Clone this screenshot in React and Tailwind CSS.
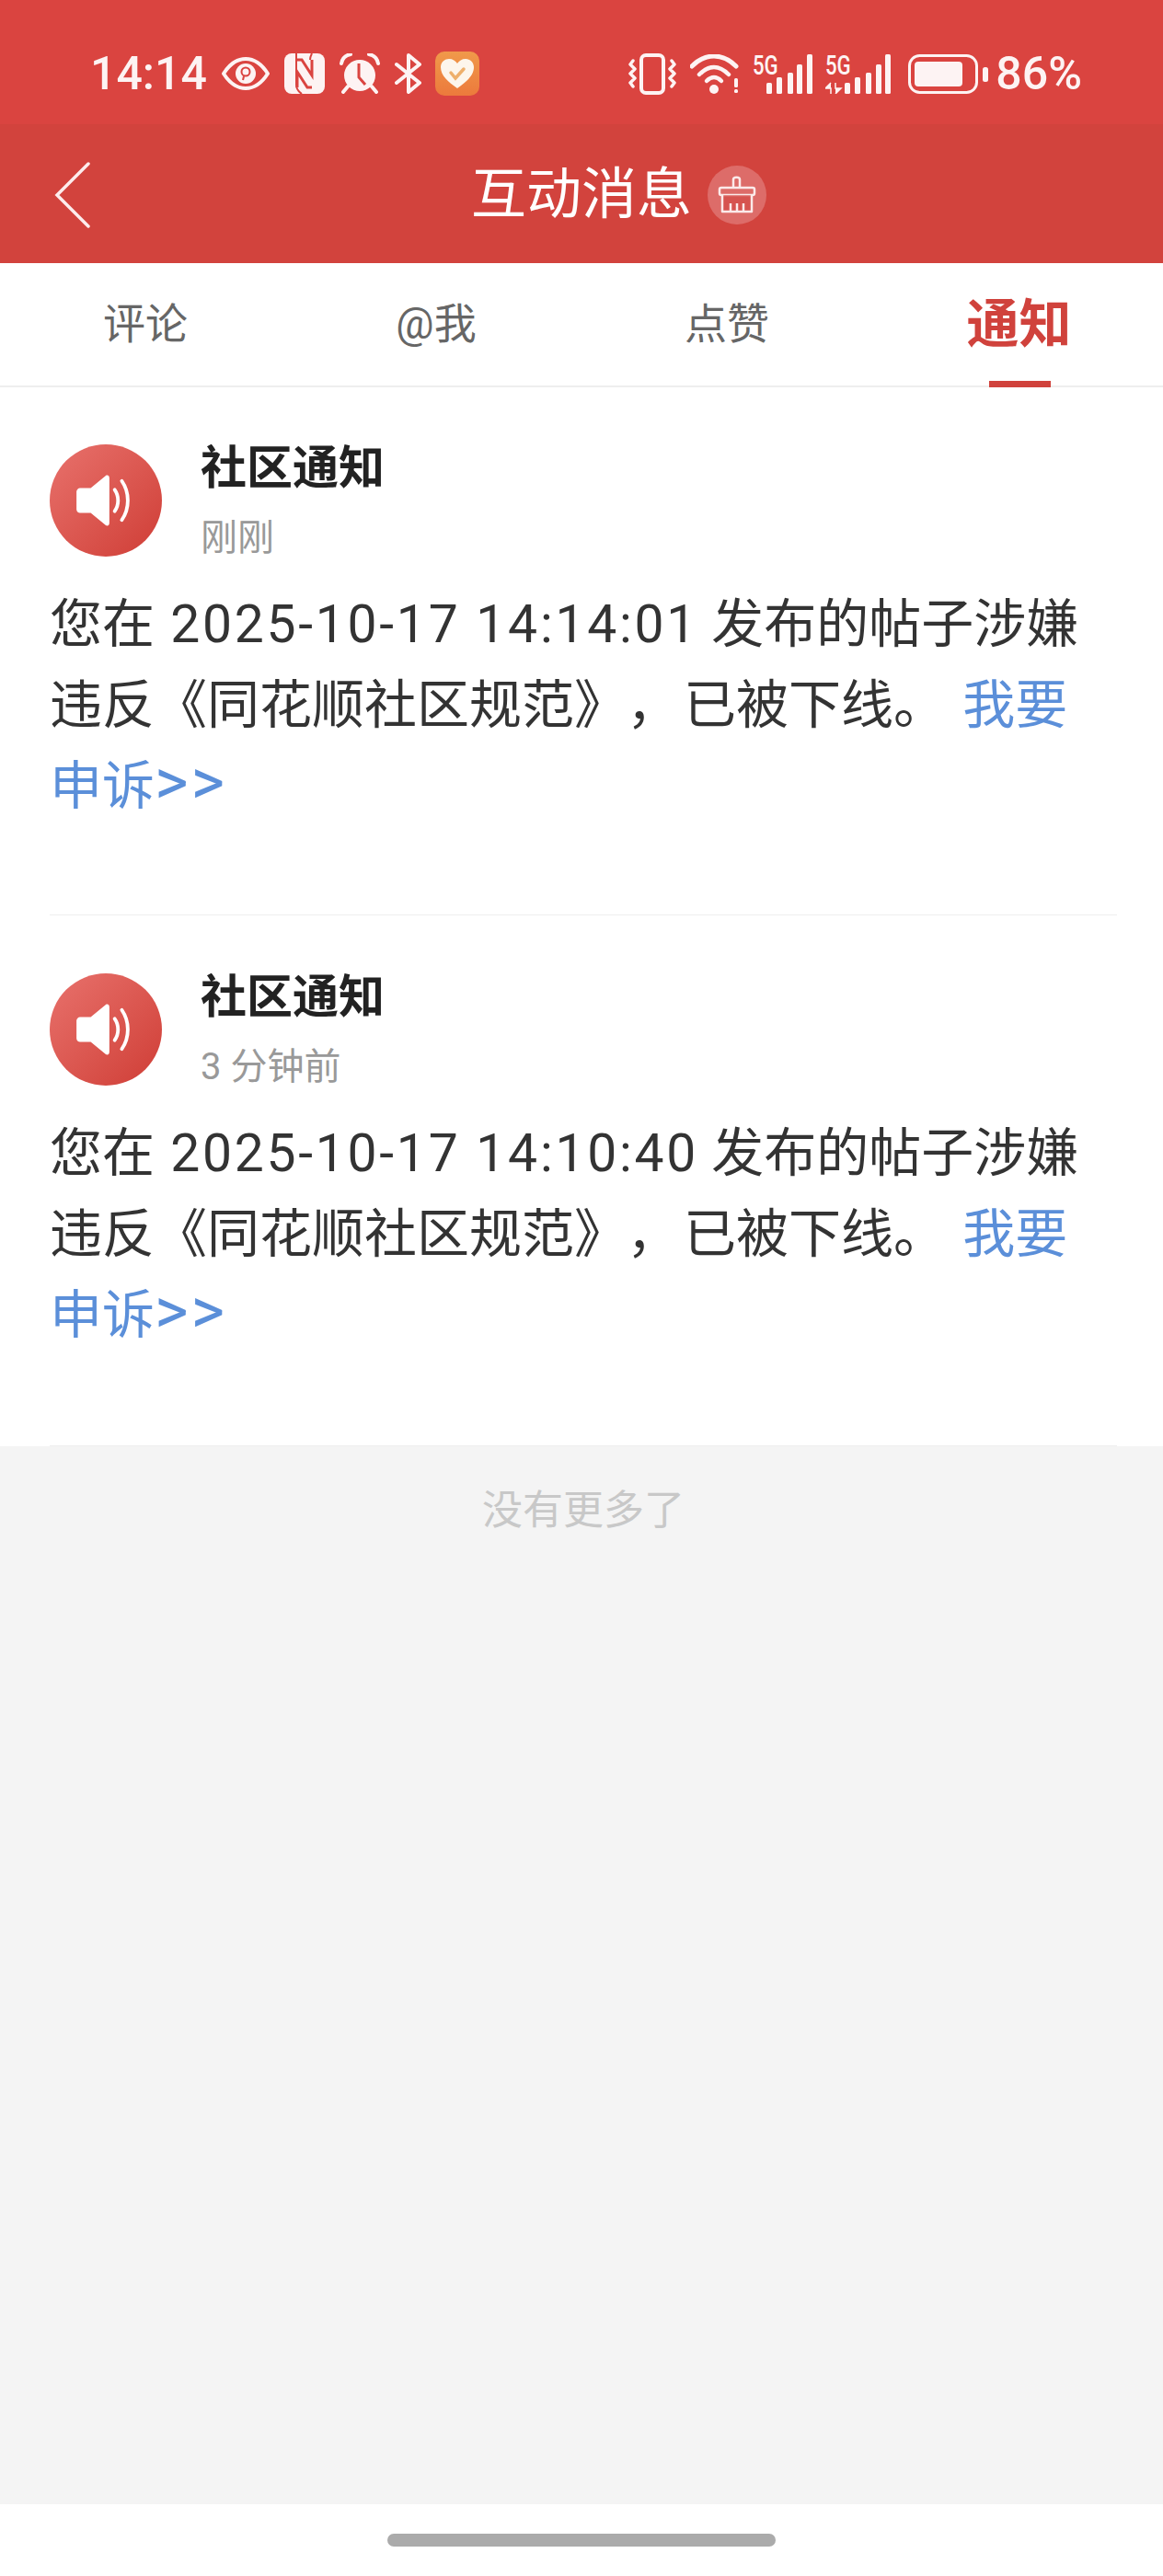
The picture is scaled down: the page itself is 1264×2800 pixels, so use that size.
const notices = [
  { time: '刚刚', stamp: '2025-10-17 14:14:01' },
  { time: '3 分钟前', stamp: '2025-10-17 14:10:40' },
];

const tabs = ['评论', '@我', '点赞'];

function EyeIcon() {
  return (
    <svg width="52" height="36" viewBox="0 0 52 36" className="ml-[16px]">
      <path d="M2 18C9 7 17 2 26 2s17 5 24 16c-7 11-15 16-24 16S9 29 2 18Z" fill="none" stroke="#fdf3f3" strokeWidth="4" strokeLinejoin="round" />
      <circle cx="26" cy="18" r="11" fill="#fdf3f3" />
      <circle cx="26" cy="16" r="4.5" fill="none" stroke="#da4440" strokeWidth="2" />
      <path d="M24 21l-1 4" stroke="#da4440" strokeWidth="2" />
    </svg>
  );
}

function NfcIcon() {
  return (
    <svg width="44" height="44" viewBox="0 0 44 44" className="ml-[16px]">
      <rect x="0" y="0" width="44" height="44" rx="8" fill="#fdf3f3" />
      <path d="M13 0v34c0 4 3 8 6 10" fill="none" stroke="#da4440" strokeWidth="2" />
      <path d="M14 7h5l11 17v-17M30 37h-5L14 20v17" fill="none" stroke="#da4440" strokeWidth="3" />
      <path d="M30 0c-1 2-2 4-2 7" fill="none" stroke="#da4440" strokeWidth="2" />
    </svg>
  );
}

function AlarmIcon() {
  return (
    <svg width="44" height="44" viewBox="0 0 44 44" className="ml-[16px]">
      <circle cx="22" cy="24" r="17" fill="#fdf3f3" />
      <path d="M2 11C3 5 7 2 12 1M42 11C41 5 37 2 32 1" fill="none" stroke="#fdf3f3" strokeWidth="4" strokeLinecap="round" />
      <path d="M9 36l-5 6M35 36l5 6" stroke="#fdf3f3" strokeWidth="4" strokeLinecap="round" />
      <path d="M21 11v15l7 8" fill="none" stroke="#da4440" strokeWidth="3" />
    </svg>
  );
}

function BluetoothIcon() {
  return (
    <svg width="30" height="44" viewBox="0 0 30 44" className="ml-[16px]">
      <path d="M2 12l25 20-12 10V2l12 10L2 32" fill="none" stroke="#fdf3f3" strokeWidth="4" strokeLinejoin="round" strokeLinecap="round" />
    </svg>
  );
}

function HealthIcon() {
  return (
    <svg width="48" height="48" viewBox="0 0 48 48" className="ml-[14px]">
      <defs>
        <linearGradient id="health" x1="0" y1="0" x2="0" y2="1">
          <stop offset="0" stopColor="#f0994a" />
          <stop offset="1" stopColor="#ec7a3c" />
        </linearGradient>
      </defs>
      <rect width="48" height="48" rx="10" fill="url(#health)" />
      <path d="M24 40C14 33 6 26 6 17 6 11 11 8 15 8c4 0 7 2 9 5 2-3 5-5 9-5 4 0 9 3 9 9 0 9-8 16-18 23Z" fill="#fdf6ec" />
      <path d="M17 23l5 6 9-10" fill="none" stroke="#eeb06c" strokeWidth="3.5" strokeLinecap="round" />
    </svg>
  );
}

function VibrateIcon() {
  return (
    <svg width="52" height="45" viewBox="0 0 52 45">
      <rect x="14" y="2" width="24" height="41" rx="5" fill="none" stroke="#fdf3f3" strokeWidth="4" />
      <path d="M5 8l-3 4 5 5-5 5 5 5-5 5 3 4M47 8l3 4-5 5 5 5-5 5 5 5-3 4" fill="none" stroke="#fdf3f3" strokeWidth="3.5" strokeLinejoin="round" strokeLinecap="round" />
    </svg>
  );
}

function WifiIcon() {
  return (
    <svg width="54" height="43" viewBox="0 0 54 43" className="ml-[15px]">
      <path d="M2 13C9 6 17 2 26 2s17 4 24 11" fill="none" stroke="#fdf3f3" strokeWidth="5" strokeLinecap="round" />
      <path d="M10 22c5-5 10-8 16-8s11 3 16 8" fill="none" stroke="#fdf3f3" strokeWidth="4.5" strokeLinecap="round" />
      <path d="M18 29c2-2 5-4 8-4s6 2 8 4" fill="none" stroke="#fdf3f3" strokeWidth="4.5" strokeLinecap="round" />
      <circle cx="26" cy="38" r="5" fill="#fdf3f3" />
      <rect x="48" y="26" width="4" height="10" rx="1.5" fill="#fdf3f3" />
      <rect x="48" y="38" width="4" height="4" rx="1.5" fill="#fdf3f3" />
    </svg>
  );
}

function SignalIcon({ arrows, className }) {
  const xs = arrows ? [21, 32, 44, 55, 65] : [15, 26, 38, 48, 59];
  const tops = [31, 25, 20, 11, 0];
  return (
    <div className={`relative h-[43px] ${arrows ? 'w-[71px]' : 'w-[65px]'} ${className}`}>
      <svg width={arrows ? 71 : 65} height="43" viewBox={`0 0 ${arrows ? 71 : 65} 43`} className="block">
        {xs.map((x, i) => (
          <rect key={x} x={x} y={tops[i]} width="6" height={43 - tops[i]} rx="1.5" fill="#fdf3f3" />
        ))}
        {arrows && (
          <path d="M6 31l-6 6h6v6M11 43l6-6h-6v-6" fill="#fdf3f3" stroke="#fdf3f3" strokeWidth="1.5" />
        )}
      </svg>
      <span className="absolute top-0 left-0 origin-top-left scale-x-[0.74] text-[30px] leading-[24px] font-medium">5G</span>
    </div>
  );
}

function BatteryIcon() {
  return (
    <svg width="87" height="43" viewBox="0 0 87 43" className="ml-[19px]">
      <rect x="1.5" y="1.5" width="73" height="40" rx="11" fill="none" stroke="#fdf3f3" strokeWidth="3" />
      <rect x="7" y="8" width="52" height="27" rx="4" fill="#fdf3f3" />
      <rect x="81" y="14" width="6" height="16" rx="2.5" fill="#fdf3f3" />
    </svg>
  );
}

function BroomIcon() {
  return (
    <div className="absolute top-[3px] left-[calc(100%+17px)] flex h-[64px] w-[64px] items-center justify-center rounded-full bg-[#dd6c69]">
      <svg width="42" height="42" viewBox="0 0 42 42" fill="none" stroke="#fbeaea" strokeWidth="2.5" strokeLinejoin="round">
        <path d="M17 13V4c0-3 7-3 7 0v9" />
        <rect x="2" y="13" width="38" height="8" rx="2" />
        <path d="M5 21v18h32V21" fill="#d2433d" fillOpacity="0.6" />
        <path d="M14 30v9M21 30v9M28 30v9" />
      </svg>
    </div>
  );
}

function SpeakerAvatar() {
  return (
    <div className="flex h-[122px] w-[122px] shrink-0 items-center justify-center rounded-full bg-linear-to-br from-[#e8716c] to-[#cf3c35]">
      <svg width="64" height="56" viewBox="0 0 66 58" fill="none">
        <path d="M4 15h12L33 1c2-1 4 0 4 3v50c0 3-2 4-4 3L16 43H4c-2 0-4-2-4-4V19c0-2 2-4 4-4Z" fill="#fff" />
        <path d="M43 17c5 7 5 17 0 24" stroke="#fff" strokeWidth="4" strokeLinecap="round" />
        <path d="M51 7c9 13 9 31 0 44" stroke="#fff" strokeWidth="4" strokeLinecap="round" />
      </svg>
    </div>
  );
}

function NoticeCard({ time, stamp, className }) {
  return (
    <div className={`mr-[50px] ml-[54px] border-b border-[#eeeeee] ${className}`}>
      <div className="flex gap-[42px]">
        <SpeakerAvatar />
        <div className="flex flex-col">
          <div className="mt-[1px] text-[50px] leading-[50px] font-bold text-[#222222]">社区通知</div>
          <div className="mt-[26px] text-[40px] leading-[50px] text-[#999999]">{time}</div>
        </div>
      </div>
      <p className="mt-[25px] w-[1140px] text-[57px] leading-[88px] text-[#333333] [text-spacing-trim:space-all]">
        您在 <span className="ml-[3px] tracking-[2.75px]">{stamp}</span> 发布的帖子涉嫌违反《同花顺社区规范》<span className="tracking-[5px]">，</span>已被下线。
        <span className="ml-[4px] text-[#5b8fd9]"> 我要申诉<span className="text-[70px] leading-none tracking-[3px]">&gt;&gt;</span></span>
      </p>
    </div>
  );
}

export default function App() {
  return (
    <div className="flex h-[2800px] w-[1264px] flex-col bg-[#f4f4f4] font-['Roboto','Noto_Sans_CJK_SC',sans-serif]">
      <div className="flex h-[135px] items-start justify-between bg-[#da4440] pt-[56px] pr-[88px] pl-[98px] text-[#fdf3f3]">
        <div className="flex items-center">
          <span className="text-[50px] leading-[48px] font-medium">14:14</span>
          <EyeIcon />
          <NfcIcon />
          <AlarmIcon />
          <BluetoothIcon />
          <HealthIcon />
        </div>
        <div className="flex items-center">
          <VibrateIcon />
          <WifiIcon />
          <SignalIcon className="ml-[14px]" />
          <SignalIcon arrows className="ml-[14px]" />
          <BatteryIcon />
          <span className="ml-[8px] text-[50px] leading-[48px] font-medium">86%</span>
        </div>
      </div>

      <div className="relative flex h-[151px] items-center justify-center bg-[#d2433d] pt-[2px] text-white">
        <svg width="40" height="72" viewBox="0 0 40 72" fill="none" className="absolute left-[59px] top-[41px]">
          <path d="M37 2 3 36l34 34" stroke="#fdecec" strokeWidth="3.5" strokeLinecap="round" />
        </svg>
        <div className="relative">
          <span className="block text-[60px] leading-[70px]">互动消息</span>
          <BroomIcon />
        </div>
      </div>

      <div className="grid h-[135px] grid-cols-4 border-b-2 border-[#eeeeee] bg-white">
        {tabs.map((tab) => (
          <div key={tab} className="flex items-center justify-center text-[46px] text-[#666666]">
            {tab}
          </div>
        ))}
        <div className="relative flex items-center justify-center pl-[3px] text-[57px] font-bold text-[#d0423c]">
          通知
          <div className="absolute bottom-[-2px] left-[127px] h-[7px] w-[67px] bg-[#d0423c]" />
        </div>
      </div>

      <div className="bg-white">
        <NoticeCard {...notices[0]} className="pt-[62px] pb-[95px]" />
        <NoticeCard {...notices[1]} className="pt-[63px] pb-[97px]" />
      </div>

      <div className="flex flex-1 justify-center pt-[45px] pl-[4px] text-[44px] leading-[50px] text-[#c8c8c8]">
        没有更多了
      </div>

      <div className="flex h-[78px] justify-center bg-white pt-[32px]">
        <div className="h-[14px] w-[422px] rounded-full bg-[#ababab]" />
      </div>
    </div>
  );
}
